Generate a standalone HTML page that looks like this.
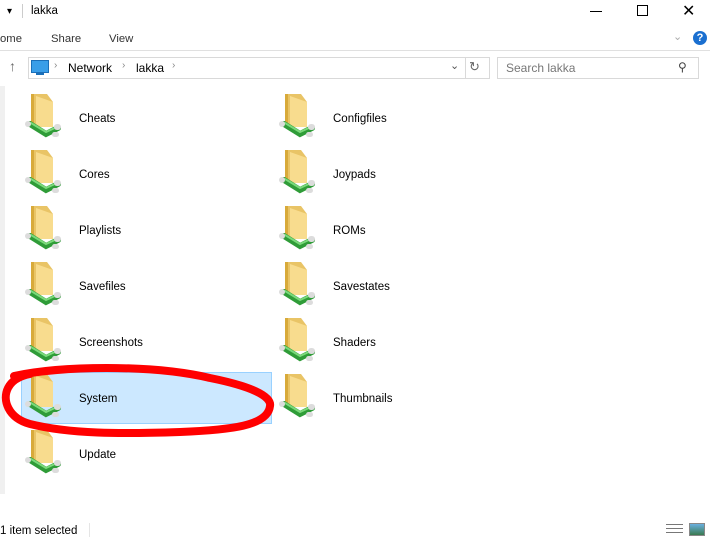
<!DOCTYPE html>
<html><head><style>
body{margin:0;width:710px;height:542px;background:#fff;font-family:"Liberation Sans",sans-serif;font-size:11.3px;color:#000;position:relative;overflow:hidden}
.a{position:absolute;white-space:nowrap}
.lbl{position:absolute;font-size:11.5px;margin-top:2px}
</style></head><body>
<!-- title -->
<div class="a" style="left:7px;top:6px;font-size:10px">&#9662;</div>
<div class="a" style="left:22px;top:4px;width:1px;height:14px;background:#ccc"></div>
<div class="a" style="left:31px;top:5px;font-size:11.5px">lakka</div>
<div class="a" style="left:590px;top:11px;width:12px;height:1px;background:#000"></div>
<div class="a" style="left:637px;top:5px;width:9px;height:9px;border:1px solid #000"></div>
<div class="a" style="left:682px;top:1px;font-size:16px">&#x2715;</div>
<!-- ribbon -->
<div class="a" style="left:0;top:33px;color:#333">ome</div>
<div class="a" style="left:51px;top:33px;color:#333">Share</div>
<div class="a" style="left:109px;top:33px;color:#333">View</div>
<div class="a" style="left:673px;top:30px;color:#aaa;font-size:11px">&#8964;</div>
<div class="a" style="left:693px;top:31px;width:14px;height:14px;border-radius:50%;background:#1a6fd0;color:#fff;font-weight:bold;font-size:11px;text-align:center;line-height:14px">?</div>
<div class="a" style="left:0;top:50px;width:710px;height:1px;background:#e0e0e0"></div>
<!-- address -->
<div class="a" style="left:9px;top:58px;font-size:14px;color:#666">&#8593;</div>
<div class="a" style="left:28px;top:57px;width:460px;height:20px;border:1px solid #d9d9d9"></div>
<div class="a" style="left:31px;top:60px;width:16px;height:11px;background:#3a9ee8;border:1px solid #1c6fb8"></div>
<div class="a" style="left:36px;top:73px;width:8px;height:2px;background:#1c6fb8"></div>
<div class="a" style="left:54px;top:60px;color:#888;font-size:10px">&#8250;</div>
<div class="a" style="left:68px;top:61px;font-size:12px">Network</div>
<div class="a" style="left:122px;top:60px;color:#888;font-size:10px">&#8250;</div>
<div class="a" style="left:136px;top:61px;font-size:12px">lakka</div>
<div class="a" style="left:172px;top:60px;color:#888;font-size:10px">&#8250;</div>
<div class="a" style="left:465px;top:57px;width:1px;height:22px;background:#d9d9d9"></div>
<div class="a" style="left:450px;top:59px;color:#555;font-size:11px">&#8964;</div>
<div class="a" style="left:469px;top:59px;color:#666;font-size:13px">&#8635;</div>
<div class="a" style="left:497px;top:57px;width:200px;height:20px;border:1px solid #d9d9d9"></div>
<div class="a" style="left:506px;top:61px;color:#777;font-size:12px">Search lakka</div>
<div class="a" style="left:678px;top:60px;color:#444;font-size:12px">&#9906;</div>
<!-- left strip -->
<div class="a" style="left:0;top:86px;width:5px;height:408px;background:#f0f0f0"></div>
<!-- selection -->
<div class="a" style="left:21px;top:372px;width:249px;height:50px;background:#cce8ff;border:1px solid #99d1ff"></div>
<svg width="0" height="0" style="position:absolute"><defs>
<symbol id="f" viewBox="0 0 40 46">
<path d="M7 2h16l6 8v25H7z" fill="#e9c466"/>
<path d="M7 2h3v33H7z" fill="#d8aa3a"/>
<path d="M12 4l17 6v25H12z" fill="#f8dc8e"/>
<path d="M6 32l16 10 12-6" stroke="#2f9c38" stroke-width="6" fill="none" stroke-linecap="round"/>
<path d="M7 31l15 9 11-5" stroke="#7ad97a" stroke-width="2" fill="none" stroke-linecap="round"/>
<rect x="1" y="29" width="6" height="6" rx="3" fill="#dcdcdc"/>
<rect x="30" y="32" width="7" height="6" rx="3" fill="#dcdcdc"/>
<rect x="28" y="40" width="7" height="5" rx="2.5" fill="#dcdcdc"/>
</symbol></defs></svg>
<!-- col1 -->
<svg class="a" style="left:24px;top:92px" width="40" height="46"><use href="#f"/></svg><div class="lbl" style="left:79px;top:111px">Cheats</div>
<svg class="a" style="left:24px;top:148px" width="40" height="46"><use href="#f"/></svg><div class="lbl" style="left:79px;top:167px">Cores</div>
<svg class="a" style="left:24px;top:204px" width="40" height="46"><use href="#f"/></svg><div class="lbl" style="left:79px;top:223px">Playlists</div>
<svg class="a" style="left:24px;top:260px" width="40" height="46"><use href="#f"/></svg><div class="lbl" style="left:79px;top:279px">Savefiles</div>
<svg class="a" style="left:24px;top:316px" width="40" height="46"><use href="#f"/></svg><div class="lbl" style="left:79px;top:335px">Screenshots</div>
<svg class="a" style="left:24px;top:372px" width="40" height="46"><use href="#f"/></svg><div class="lbl" style="left:79px;top:391px">System</div>
<svg class="a" style="left:24px;top:428px" width="40" height="46"><use href="#f"/></svg><div class="lbl" style="left:79px;top:447px">Update</div>
<!-- col2 -->
<svg class="a" style="left:278px;top:92px" width="40" height="46"><use href="#f"/></svg><div class="lbl" style="left:333px;top:111px">Configfiles</div>
<svg class="a" style="left:278px;top:148px" width="40" height="46"><use href="#f"/></svg><div class="lbl" style="left:333px;top:167px">Joypads</div>
<svg class="a" style="left:278px;top:204px" width="40" height="46"><use href="#f"/></svg><div class="lbl" style="left:333px;top:223px">ROMs</div>
<svg class="a" style="left:278px;top:260px" width="40" height="46"><use href="#f"/></svg><div class="lbl" style="left:333px;top:279px">Savestates</div>
<svg class="a" style="left:278px;top:316px" width="40" height="46"><use href="#f"/></svg><div class="lbl" style="left:333px;top:335px">Shaders</div>
<svg class="a" style="left:278px;top:372px" width="40" height="46"><use href="#f"/></svg><div class="lbl" style="left:333px;top:391px">Thumbnails</div>
<!-- red ellipse -->
<svg class="a" style="left:0;top:360px" width="290" height="85">
<path d="M14 16 C60 6 150 4 210 18 C250 26 272 36 270 46 C268 66 230 70 180 72 C120 74 70 74 30 64 C8 58 2 40 8 28 C12 20 20 16 30 14" stroke="#f00" stroke-width="8" fill="none" stroke-linecap="round"/>
</svg>
<!-- status -->
<div class="a" style="left:0;top:525px;font-size:11.5px">1 item selected</div>
<div class="a" style="left:89px;top:523px;width:1px;height:14px;background:#e5e5e5"></div>
<div class="a" style="left:666px;top:524px;width:17px;height:11px;background:repeating-linear-gradient(#777 0 1px,#fff 1px 4px)"></div>
<div class="a" style="left:689px;top:523px;width:14px;height:11px;border:1px solid #888;background:linear-gradient(#6ab0e0,#3a7a50)"></div>
</body></html>
